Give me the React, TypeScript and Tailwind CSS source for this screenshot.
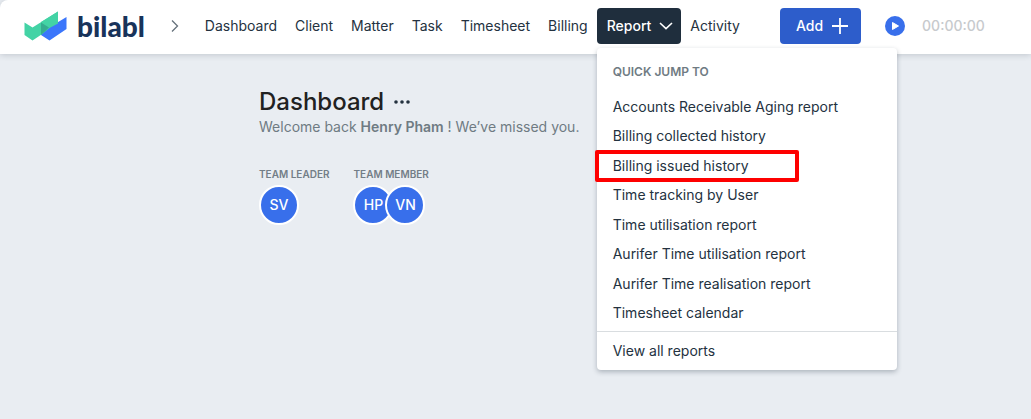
const NAV_ITEMS = ['Dashboard', 'Client', 'Matter', 'Task', 'Timesheet', 'Billing'];

const REPORTS = [
  'Accounts Receivable Aging report',
  'Billing collected history',
  'Billing issued history',
  'Time tracking by User',
  'Time utilisation report',
  'Aurifer Time utilisation report',
  'Aurifer Time realisation report',
  'Timesheet calendar',
];

const HIGHLIGHTED = 'Billing issued history';

function Logo() {
  return (
    <a href="#home" className="flex items-center gap-2.5">
      <svg width="43" height="30" viewBox="0 0 43 30" aria-hidden="true">
        <path d="M0.5 11.5 L8.5 16.5 L34 0.5 V12.5 L8.5 29.5 L0.5 24 Z" fill="#43d3a5" />
        <path d="M17 11.5 L25 16.5 L42.5 6 V18 L25.5 29.5 L17 24 Z" fill="#3b76fb" />
        <path d="M17 11 V24 L25.5 17 L34 12.5 V0.5 Z" fill="#43d3a5" />
        <path d="M17 11.5 L25 16.5 L17 24 Z" fill="#35ac8f" />
      </svg>
      <span className="font-['Lato',sans-serif] text-[28px] leading-8 font-black text-[#18335a]">bilabl</span>
    </a>
  );
}

function ReportMenu() {
  return (
    <div className="absolute top-10 left-0 z-10 w-[300px] rounded bg-white pt-3 shadow-[0_2px_5px_rgba(33,47,62,0.3)]">
      <h2 className="px-4 text-xs leading-6 font-semibold text-[#6f7b83]">QUICK JUMP TO</h2>
      <ul className="mt-2 grid h-[236px] grid-rows-8">
        {REPORTS.map((report) => (
          <li key={report} className="relative">
            <a href="#report" className="flex h-full items-center px-4 text-[#24323f] hover:bg-gray-50">
              {report}
            </a>
            {report === HIGHLIGHTED && (
              <span className="pointer-events-none absolute -inset-y-px -left-0.5 w-[204px] rounded-xs border-4 border-[#fe0000]" />
            )}
          </li>
        ))}
      </ul>
      <div className="mt-[3px] border-t border-[#d9dde0]">
        <a href="#reports" className="flex h-[38px] items-center px-4 text-[#24323f]">
          View all reports
        </a>
      </div>
    </div>
  );
}

function Avatar({ initials }: { initials: string }) {
  return (
    <span className="flex size-10 items-center justify-center rounded-full border-2 border-white bg-[#386feb] text-sm font-medium text-white">
      {initials}
    </span>
  );
}

function Team({ label, members }: { label: string; members: string[] }) {
  return (
    <section>
      <h2 className="text-[10px] leading-4 font-semibold text-[#737e87]">{label}</h2>
      <div className="mt-[3px] flex -space-x-2">
        {members.map((member) => (
          <Avatar key={member} initials={member} />
        ))}
      </div>
    </section>
  );
}

export default function App() {
  return (
    <div className="min-h-screen bg-[#e9edf2] font-['Inter',sans-serif] text-sm text-[#24323f]">
      <header className="relative flex h-[54px] items-center rounded-tl-lg bg-white pb-0.5 pl-6 shadow-[0_1px_6px_rgba(33,47,62,0.2)]">
        <Logo />
        <svg width="8" height="14" viewBox="0 0 8 14" className="ml-[26px] shrink-0" aria-hidden="true">
          <path d="M1 1.5 L6.5 7 L1 12.5" fill="none" stroke="#65717b" strokeWidth="1.3" />
        </svg>

        <nav className="ml-[17px] flex items-center">
          {NAV_ITEMS.map((item) => (
            <a key={item} href="#nav" className="px-[9px] py-2">
              {item}
            </a>
          ))}
          <div className="relative">
            <button
              type="button"
              aria-expanded="true"
              className="flex h-9 items-center gap-2 rounded bg-[#1f2e3d] pr-2 pl-2.5 font-medium text-white"
            >
              Report
              <svg width="14" height="8" viewBox="0 0 14 8" aria-hidden="true">
                <path d="M1 1 L7 6.7 L13 1" fill="none" stroke="currentColor" strokeWidth="1.6" />
              </svg>
            </button>
            <ReportMenu />
          </div>
          <a href="#activity" className="px-[9px] py-2">
            Activity
          </a>
        </nav>

        <button
          type="button"
          className="ml-[31px] flex h-9 items-center gap-2 rounded bg-[#2d5dcb] pr-3 pl-4 font-medium text-white"
        >
          Add
          <svg width="18" height="18" viewBox="0 0 18 18" aria-hidden="true">
            <path d="M9 1 V17 M1 9 H17" fill="none" stroke="currentColor" strokeWidth="1.8" />
          </svg>
        </button>
        <button type="button" aria-label="Start timer" className="ml-6">
          <svg width="20" height="20" viewBox="0 0 20 20" aria-hidden="true">
            <circle cx="10" cy="10" r="10" fill="#386feb" />
            <path d="M7.5 6.5 L13.5 10 L7.5 13.5 Z" fill="#fff" stroke="#fff" strokeLinejoin="round" />
          </svg>
        </button>
        <span className="ml-[17px] font-medium text-[#c7cacd]">00:00:00</span>
      </header>

      <main className="pt-8 pl-[259px]">
        <div className="flex items-center gap-2">
          <h1 className="text-2xl leading-[31px] font-medium text-[#212121]">Dashboard</h1>
          <button type="button" aria-label="More options">
            <svg width="20" height="6" viewBox="0 0 20 6" fill="#24323f" aria-hidden="true">
              <circle cx="4" cy="3" r="1.8" />
              <circle cx="10" cy="3" r="1.8" />
              <circle cx="16" cy="3" r="1.8" />
            </svg>
          </button>
        </div>
        <p className="text-[#6f7b83]">
          Welcome back <strong className="font-semibold">Henry Pham</strong> ! We’ve missed you.
        </p>
        <div className="mt-[29px] flex gap-6">
          <Team label="TEAM LEADER" members={['SV']} />
          <Team label="TEAM MEMBER" members={['HP', 'VN']} />
        </div>
      </main>
    </div>
  );
}
